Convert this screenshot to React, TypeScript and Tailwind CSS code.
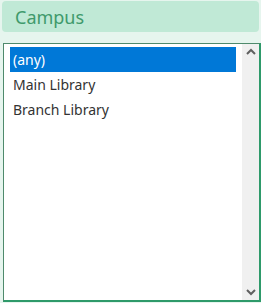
import React from "react";

export default function App() {
  return (
    <div className="w-[261px] h-[303px] bg-[#e6f5ee] relative" style={{ fontFamily: '"Noto Sans", sans-serif' }}>
      <div className="absolute left-[2px] top-[1px] w-[257px] h-[31px] rounded-[4px] bg-[#c0e9d6] flex items-center pl-[13px]">
        <span className="text-[18px] text-[#3f9a6c] leading-none">Campus</span>
      </div>
      <div className="absolute left-[3px] top-[43px] w-[258px] h-[259px] bg-white border border-[#4e8a6c] border-r-[2px] border-b-[2px] border-r-[#2e9a6a] border-b-[#2e9a6a] flex">
        <div className="flex-1 pt-[3px] pl-[6px] pr-[6px]">
          <div className="h-[25px] bg-[#0078d7] text-white text-[14px] flex items-center pl-[3px]">(any)</div>
          <div className="h-[25px] text-[#333] text-[14px] flex items-center pl-[3px]">Main Library</div>
          <div className="h-[24px] text-[#333] text-[14px] flex items-center pl-[3px]">Branch Library</div>
        </div>
        <div className="w-[17px] bg-[#f0f0f0] flex flex-col justify-between items-center py-[4px]">
          <svg width="10" height="8" viewBox="0 0 10 8"><path d="M1 6 L5 2 L9 6" stroke="#606060" strokeWidth="2" fill="none" /></svg>
          <svg width="10" height="8" viewBox="0 0 10 8"><path d="M1 2 L5 6 L9 2" stroke="#606060" strokeWidth="2" fill="none" /></svg>
        </div>
      </div>
    </div>
  );
}
